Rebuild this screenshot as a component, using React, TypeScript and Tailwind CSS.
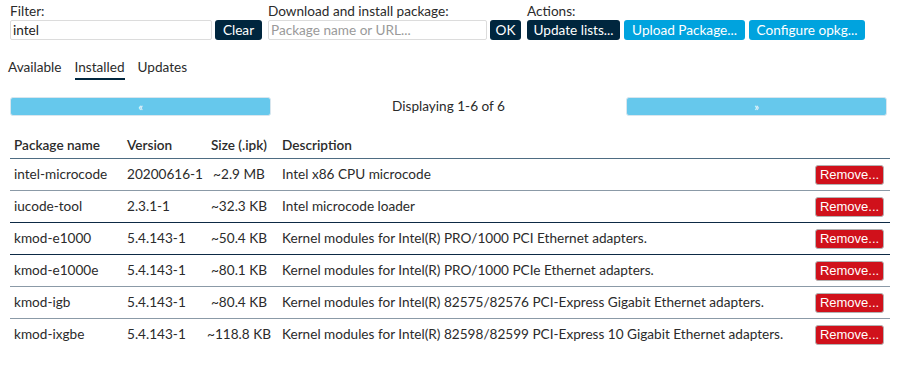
import React from "react";

const rows = [
  { name: "intel-microcode", ver: "20200616-1", size: "~2.9 MB", desc: "Intel x86 CPU microcode", line: "border-[#8b9aa7]" },
  { name: "iucode-tool", ver: "2.3.1-1", size: "~32.3 KB", desc: "Intel microcode loader", line: "border-[#0d2a45]" },
  { name: "kmod-e1000", ver: "5.4.143-1", size: "~50.4 KB", desc: "Kernel modules for Intel(R) PRO/1000 PCI Ethernet adapters.", line: "border-[#0d2a45]" },
  { name: "kmod-e1000e", ver: "5.4.143-1", size: "~80.1 KB", desc: "Kernel modules for Intel(R) PRO/1000 PCIe Ethernet adapters.", line: "border-[#8b9aa7]" },
  { name: "kmod-igb", ver: "5.4.143-1", size: "~80.4 KB", desc: "Kernel modules for Intel(R) 82575/82576 PCI-Express Gigabit Ethernet adapters.", line: "border-[#8b9aa7]" },
  { name: "kmod-ixgbe", ver: "5.4.143-1", size: "~118.8 KB", desc: "Kernel modules for Intel(R) 82598/82599 PCI-Express 10 Gigabit Ethernet adapters.", line: "border-transparent" },
];

export default function App() {
  return (
    <div className="h-[377px] w-[900px] bg-white font-['Lato',sans-serif] text-[13.6px] text-[#2b2b2b]">
      {/* controls */}
      <div className="flex gap-[6px] pl-[10px] pt-[2px]">
        <div className="flex flex-col">
          <span className="h-[18px] leading-[18px]">Filter:</span>
          <div className="flex gap-[3px]">
            <input
              readOnly
              value="intel"
              className="h-[20px] w-[202px] rounded-[2px] border border-[#dcdcdc] px-[2px] text-[13.6px] text-[#222] outline-none"
            />
            <button className="h-[20px] w-[47px] rounded-[3px] bg-[#00263e] text-[13.6px] text-white">Clear</button>
          </div>
        </div>
        <div className="flex flex-col">
          <span className="h-[18px] leading-[18px]">Download and install package:</span>
          <div className="flex gap-[3px]">
            <input
              readOnly
              placeholder="Package name or URL..."
              className="h-[20px] w-[219px] rounded-[2px] border border-[#dcdcdc] px-[2px] text-[13.6px] outline-none placeholder:text-[#9a9a9a]"
            />
            <button className="h-[20px] w-[31px] rounded-[3px] bg-[#00263e] text-[13.6px] text-white">OK</button>
          </div>
        </div>
        <div className="flex flex-col">
          <span className="h-[18px] leading-[18px]">Actions:</span>
          <div className="flex gap-[4px]">
            <button className="h-[20px] w-[93px] rounded-[3px] bg-[#00263e] text-[13.6px] text-white">Update lists...</button>
            <button className="h-[20px] w-[121px] rounded-[3px] bg-[#00a3de] text-[13.6px] text-white">Upload Package...</button>
            <button className="h-[20px] w-[116px] rounded-[3px] bg-[#00a3de] text-[13.6px] text-white">Configure opkg...</button>
          </div>
        </div>
      </div>

      {/* tabs */}
      <div className="mt-[17px] flex gap-[13px] pl-[8px]">
        <span className="pb-[3px]">Available</span>
        <span className="border-b-2 border-[#00263e] pb-[1px]">Installed</span>
        <span className="pb-[3px]">Updates</span>
      </div>

      {/* pager */}
      <div className="mt-[16px] flex items-center pl-[10px] pr-[13px]">
        <button className="h-[19px] w-[261px] rounded-[3px] border border-[#d8e6ee] bg-[#66c8ec] text-[11px] leading-none text-white">«</button>
        <div className="flex-1 text-center">Displaying 1-6 of 6</div>
        <button className="h-[19px] w-[261px] rounded-[3px] border border-[#d8e6ee] bg-[#66c8ec] text-[11px] leading-none text-white">»</button>
      </div>

      {/* table */}
      <div className="mx-[10px] mt-[16px]">
        <div className="grid h-[26px] grid-cols-[113px_83px_66px_1fr] items-center border-b border-[#4e6c82] font-semibold">
          <span className="pl-[4px]">Package name</span>
          <span className="pl-[4px]">Version</span>
          <span className="text-center">Size (.ipk)</span>
          <span className="pl-[10px]">Description</span>
        </div>
        {rows.map((r) => (
          <div
            key={r.name}
            className={`grid h-[32px] grid-cols-[113px_83px_66px_1fr_auto] items-center border-b ${r.line}`}
          >
            <span className="pl-[4px]">{r.name}</span>
            <span className="pl-[4px]">{r.ver}</span>
            <span className="text-center">{r.size}</span>
            <span className="pl-[10px]">{r.desc}</span>
            <span className="pr-[6px]">
              <button className="h-[20px] w-[69px] rounded-[3px] border border-[#b3b3b3] bg-[#d0111b] font-['Liberation_Sans',sans-serif] text-[13px] leading-none text-white">
                Remove...
              </button>
            </span>
          </div>
        ))}
      </div>
    </div>
  );
}
